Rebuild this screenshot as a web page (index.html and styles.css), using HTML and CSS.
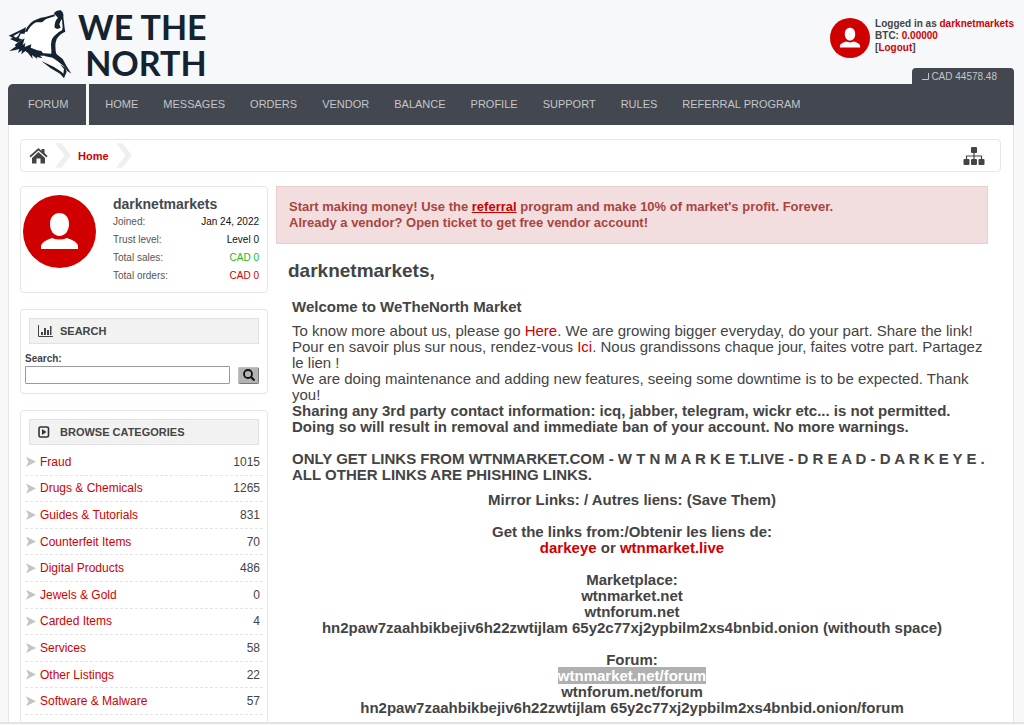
FILE: index.html
```html
<!DOCTYPE html>
<html lang="en">
<head>
<meta charset="utf-8">
<title>WeTheNorth Market</title>
<link rel="stylesheet" href="styles.css">
</head>
<body>
<header class="header">
  <a class="logo" href="#">
    <svg class="wolf" viewBox="12 10 192 210" aria-hidden="true">
      <path fill="#fff" d="M160 22L120 38L85 48L62 70L55 100L75 120L112 148L172 206L182 190L150 145L146 100L174 75L176 38Z"/>
      <g fill="#14232f">
        <path d="M150 22Q158 12 170 14Q180 20 178 34L182 68L184 78Q168 84 158 100Q150 120 158 150L142 128Q138 105 150 92Q162 78 174 74L176 66L174 40Q168 46 166 56L170 66L160 70L152 66Q150 48 162 36L156 30Q150 26 150 22Z"/>
        <path d="M152 26L124 34Q96 38 80 52Q68 64 62 78L70 78Q78 60 96 50L114 50L126 40L152 32Z"/>
        <path fill-rule="evenodd" d="M14 90L56 70L66 64L62 84L50 84L44 98L56 102L40 110L18 100L26 96ZM28 91L48 80L42 91L36 96Z"/>
        <path d="M16 136L36 122L32 118L44 108L62 98L56 118L64 112L62 124L82 116L80 126L100 134L112 136L122 150L108 150L116 158L98 154L100 160L84 148L86 160L72 142L64 136L52 146L54 134L42 142L46 130L32 134Z"/>
        <path d="M142 124L158 146L176 160L188 182L202 204L190 196L180 182L160 166L146 156L124 152L110 142L142 144Z"/>
        <path d="M112 166L150 184L172 198L178 204L180 190L168 176L184 186L188 198L180 218L168 204L140 188Z"/>
      </g>
    </svg>
    <span class="wordmark"><span>WE THE</span><span>NORTH</span></span>
  </a>
  <div class="account">
    <div class="user">
      <svg class="avatar-small" viewBox="0 0 73 73" aria-hidden="true"><circle cx="36.500" cy="36.500" r="36.500" fill="#d00000"/><path fill="#fff" d="M36.500 18C42 18 46 22 46 29C46 36 42 41 36.500 41C31 41 27 36 27 29C27 22 31 18 36.500 18ZM29 43Q36.500 46 44 43Q54 46 55 51V54H18V51Q19 46 29 43Z"/></svg>
      <div>Logged in as <a href="#">darknetmarkets</a><br>BTC: <a href="#">0.00000</a><br>[<a href="#">Logout</a>]</div>
    </div>
    <div class="rate"><svg viewBox="0 0 7 7" aria-hidden="true"><path fill="none" stroke="#c4c6c9" d="M0 6.500H6.500V0"/></svg> CAD 44578.48</div>
  </div>
</header>
<nav class="nav">
  <a class="forum" href="#">FORUM</a>
  <div class="menu"><a href="#">HOME</a><a href="#">MESSAGES</a><a href="#">ORDERS</a><a href="#">VENDOR</a><a href="#">BALANCE</a><a href="#">PROFILE</a><a href="#">SUPPORT</a><a href="#">RULES</a><a href="#">REFERRAL PROGRAM</a></div>
</nav>
<div class="page">
  <div class="crumbs">
    <a href="#" aria-label="Home page"><svg class="home" viewBox="0 0 18 16" aria-hidden="true"><path fill="#444" d="M9 0L12 3V1H15V5L18 8L17 9.500L9 2.500L1 9.500L0 8ZM9 4L15.500 10V15.500H11V10.500H7V15.500H2.500V10Z"/></svg></a>
    <svg class="chevron" viewBox="0 0 17 26" aria-hidden="true"><path fill="#efefef" d="M0 0H7L17 13L7 26H0L10 13Z"/></svg>
    <a href="#">Home</a>
    <svg class="chevron" viewBox="0 0 17 26" aria-hidden="true"><path fill="#efefef" d="M0 0H7L17 13L7 26H0L10 13Z"/></svg>
    <a class="sitemap" href="#" aria-label="Site map"><svg viewBox="0 0 21 18" aria-hidden="true"><g fill="#444"><rect x="7.500" width="6" height="6" rx="1"/><rect y="12" width="6" height="6" rx="1"/><rect x="7.500" y="12" width="6" height="6" rx="1"/><rect x="15" y="12" width="6" height="6" rx="1"/></g><path fill="none" stroke="#444" stroke-width="1.200" d="M10.500 5V13M3 13V9H18V13"/></svg></a>
  </div>
  <div class="columns">
    <aside class="sidebar">
      <section class="card profile">
        <svg class="avatar" viewBox="0 0 73 73" aria-hidden="true"><circle cx="36.500" cy="36.500" r="36.500" fill="#d00000"/><path fill="#fff" d="M36.500 18C42 18 46 22 46 29C46 36 42 41 36.500 41C31 41 27 36 27 29C27 22 31 18 36.500 18ZM29 43Q36.500 46 44 43Q54 46 55 51V54H18V51Q19 46 29 43Z"/></svg>
        <div class="facts">
          <h2>darknetmarkets</h2>
          <dl>
            <div><dt>Joined:</dt><dd>Jan 24, 2022</dd></div>
            <div><dt>Trust level:</dt><dd>Level 0</dd></div>
            <div><dt>Total sales:</dt><dd class="green">CAD 0</dd></div>
            <div><dt>Total orders:</dt><dd class="red">CAD 0</dd></div>
          </dl>
        </div>
      </section>
      <section class="card">
        <h3><svg viewBox="0 0 15 12" aria-hidden="true"><path fill="none" stroke="#444" d="M.5 0V11.500H15"/><path fill="#444" d="M3 7H5V10H3ZM6 3H8V10H6ZM9 5H11V10H9ZM12 1H13.500V10H12Z"/></svg>SEARCH</h3>
        <form class="search">
          <label for="q">Search:</label>
          <div class="search-row"><input id="q" type="text"><button type="button" aria-label="Search"><svg viewBox="0 0 12 12" aria-hidden="true"><circle cx="5" cy="5" r="4" fill="none" stroke="#111" stroke-width="1.800"/><path stroke="#111" stroke-width="2.200" d="M8 8L11.500 11.500"/></svg></button></div>
        </form>
      </section>
      <section class="card">
        <h3><svg viewBox="0 0 15 12" aria-hidden="true"><rect x="1" y="1" width="9.500" height="10" rx="1.500" fill="none" stroke="#333" stroke-width="1.600"/><path fill="#333" d="M4 3L8.500 6L4 9Z"/></svg>BROWSE CATEGORIES</h3>
        <ul class="categories">
          <li><a href="#">Fraud</a><span>1015</span></li>
          <li><a href="#">Drugs &amp; Chemicals</a><span>1265</span></li>
          <li><a href="#">Guides &amp; Tutorials</a><span>831</span></li>
          <li><a href="#">Counterfeit Items</a><span>70</span></li>
          <li><a href="#">Digital Products</a><span>486</span></li>
          <li><a href="#">Jewels &amp; Gold</a><span>0</span></li>
          <li><a href="#">Carded Items</a><span>4</span></li>
          <li><a href="#">Services</a><span>58</span></li>
          <li><a href="#">Other Listings</a><span>22</span></li>
          <li><a href="#">Software &amp; Malware</a><span>57</span></li>
        </ul>
      </section>
    </aside>
    <main class="main">
      <div class="notice">Start making money! Use the <a href="#">referral</a> program and make 10% of market's profit. Forever.<br>Already a vendor? Open ticket to get free vendor account!</div>
      <h1>darknetmarkets,</h1>
      <div class="article">
        <h2>Welcome to WeTheNorth Market</h2>
        <p>To know more about us, please go <a href="#">Here</a>. We are growing bigger everyday, do your part. Share the link!<br>
        Pour en savoir plus sur nous, rendez-vous <a href="#">Ici</a>. Nous grandissons chaque jour, faites votre part. Partagez<br>le lien !<br>
        We are doing maintenance and adding new features, seeing some downtime is to be expected. Thank<br>you!<br>
        <b>Sharing any 3rd party contact information: icq, jabber, telegram, wickr etc... is not permitted.<br>
        Doing so will result in removal and immediate ban of your account. No more warnings.<br><br>
        ONLY GET LINKS FROM WTNMARKET.COM - W T N M A R K E T.LIVE - D R E A D - D A R K E Y E .<br>ALL OTHER LINKS ARE PHISHING LINKS.</b></p>
        <p class="mirrors">Mirror Links: / Autres liens: (Save Them)<br><br>
        Get the links from:/Obtenir les liens de:<br><a href="#">darkeye</a> or <a href="#">wtnmarket.live</a><br><br>
        Marketplace:<br>wtnmarket.net<br>wtnforum.net<br>hn2paw7zaahbikbejiv6h22zwtijlam 65y2c77xj2ypbilm2xs4bnbid.onion (withouth space)<br><br>
        Forum:<br><mark>wtnmarket.net/forum</mark><br>wtnforum.net/forum<br>hn2paw7zaahbikbejiv6h22zwtijlam 65y2c77xj2ypbilm2xs4bnbid.onion/forum</p>
      </div>
    </main>
  </div>
</div>
<div class="window-edge"></div>
</body>
</html>
```
FILE: styles.css
```css
* { box-sizing: border-box; }
body { margin: 0; padding: 0 10px 0 8px; background: #f6f8fa; color: #444; font-family: "Liberation Sans", Arial, sans-serif; font-size: 12px; }
a { color: #d00000; text-decoration: none; }
h1, h2, h3, p, dl, dd, ul { margin: 0; padding: 0; }
svg { display: block; flex: none; }

.header { display: flex; justify-content: space-between; height: 84px; }
.logo { display: flex; gap: 6px; padding-top: 9px; color: #14232f; }
.wolf { width: 64px; height: 70px; }
.wordmark { display: flex; flex-direction: column; align-items: flex-end; font: 700 34px/36px Lato, sans-serif; white-space: nowrap; }
.account { display: flex; flex-direction: column; justify-content: space-between; align-items: flex-end; padding-top: 18px; }
.user { display: flex; gap: 5px; font-size: 10px; font-weight: 700; line-height: 12px; }
.avatar-small { width: 40px; height: 40px; }
.rate { display: flex; align-items: center; gap: 2px; height: 16px; padding: 0 17px 0 10px; border-radius: 4px 4px 0 0; background: #43474f; color: #c4c6c9; font-size: 10px; }
.rate svg { width: 7px; height: 7px; }

.nav { display: flex; gap: 3px; font-size: 11px; line-height: 41px; }
.nav a { color: #c4c6c9; }
.forum { padding: 0 18px 0 20px; border-radius: 5px 0 0 0; background: #43474f; }
.menu { display: flex; flex: 1; gap: 25px; padding-left: 16px; background: #43474f; }

.page { padding: 14px 12px 40px 11px; border: 1px solid #e6e8ea; border-top: 0; background: #fff; }
.crumbs { display: flex; align-items: center; gap: 7px; height: 33px; padding: 0 15px 0 8px; border: 1px solid #e8e6e7; border-radius: 4px; font-size: 11px; font-weight: 700; }
.home { width: 19px; height: 16px; }
.chevron { width: 16px; height: 25px; }
.sitemap { margin-left: auto; }
.sitemap svg { width: 22px; height: 18px; }

.columns { display: flex; gap: 8px; padding: 14px 13px 0 0; }
.sidebar { display: flex; flex-direction: column; flex: none; gap: 16px; width: 248px; }
.card { padding: 8px; border: 1px solid #ebe4e6; border-radius: 4px; }
.profile { display: flex; gap: 17px; padding-bottom: 7px; padding-left: 2px; }
.avatar { width: 73px; height: 73px; }
.facts { flex: 1; }
.facts h2 { color: #43474f; font-size: 14px; line-height: 18px; }
.facts dl { font-size: 10px; line-height: 18px; }
.facts dl div { display: flex; justify-content: space-between; }
.facts dt { color: #555; }
.facts dd { color: #111; }
.facts .green { color: #19b819; }
.facts .red { color: #d00000; }
.card h3 { display: flex; align-items: center; gap: 7px; height: 26px; padding: 0 8px; border: 1px solid #e2e2e2; background: #f2f2f2; font-size: 11px; }
.card h3 svg { width: 15px; height: 12px; }
.search { margin: 8px 0 1px -4px; }
.search label { display: block; font-size: 10px; font-weight: 700; line-height: 14px; }
.search-row { display: flex; align-items: center; gap: 8px; }
.search input { flex: 1; min-width: 0; height: 18px; border: 1px solid #9b98a3; border-radius: 1px; background: #fff; }
.search button { display: grid; place-items: center; width: 21px; height: 17px; padding: 0; border: 1px solid #c0c0c0; border-right-color: #777; border-bottom-color: #777; border-radius: 2px; background: #b3b3b3; }
.search button svg { width: 12px; height: 12px; }
.categories { display: grid; grid-auto-rows: 1fr; height: 266px; margin: 4px -4px 0; list-style: none; font-size: 12px; }
.categories li { display: flex; align-items: center; padding: 0 3px 0 1px; border-bottom: 1px dashed #e4e4e4; }
.categories li::before { content: ""; width: 10px; height: 10px; margin-right: 4px; background: #c4c4c4; clip-path: polygon(0 0, 100% 50%, 0 100%, 25% 50%); }
.categories span { margin-left: auto; }

.main { flex: 1; min-width: 0; }
.notice { padding: 12px; border: 1px solid #ebccd1; background: #f2dede; color: #a94442; font-size: 13px; font-weight: 700; line-height: 16px; }
.notice a { color: #d00000; text-decoration: underline; }
.main h1 { padding: 16px 12px; font-size: 19px; line-height: 22px; }
.article { padding: 0 16px; font-size: 15px; line-height: 16px; white-space: nowrap; }
.article h2 { margin: 1px 0 8px; font-size: 15px; line-height: 16px; }
.mirrors { padding-top: 9px; font-weight: 700; text-align: center; }
mark { background: #b0b0b0; color: #fff; }
.window-edge { position: fixed; right: 0; bottom: 0; left: 0; height: 3px; border-top: 2px solid #e6e2df; background: #f8f8f8; }
```
